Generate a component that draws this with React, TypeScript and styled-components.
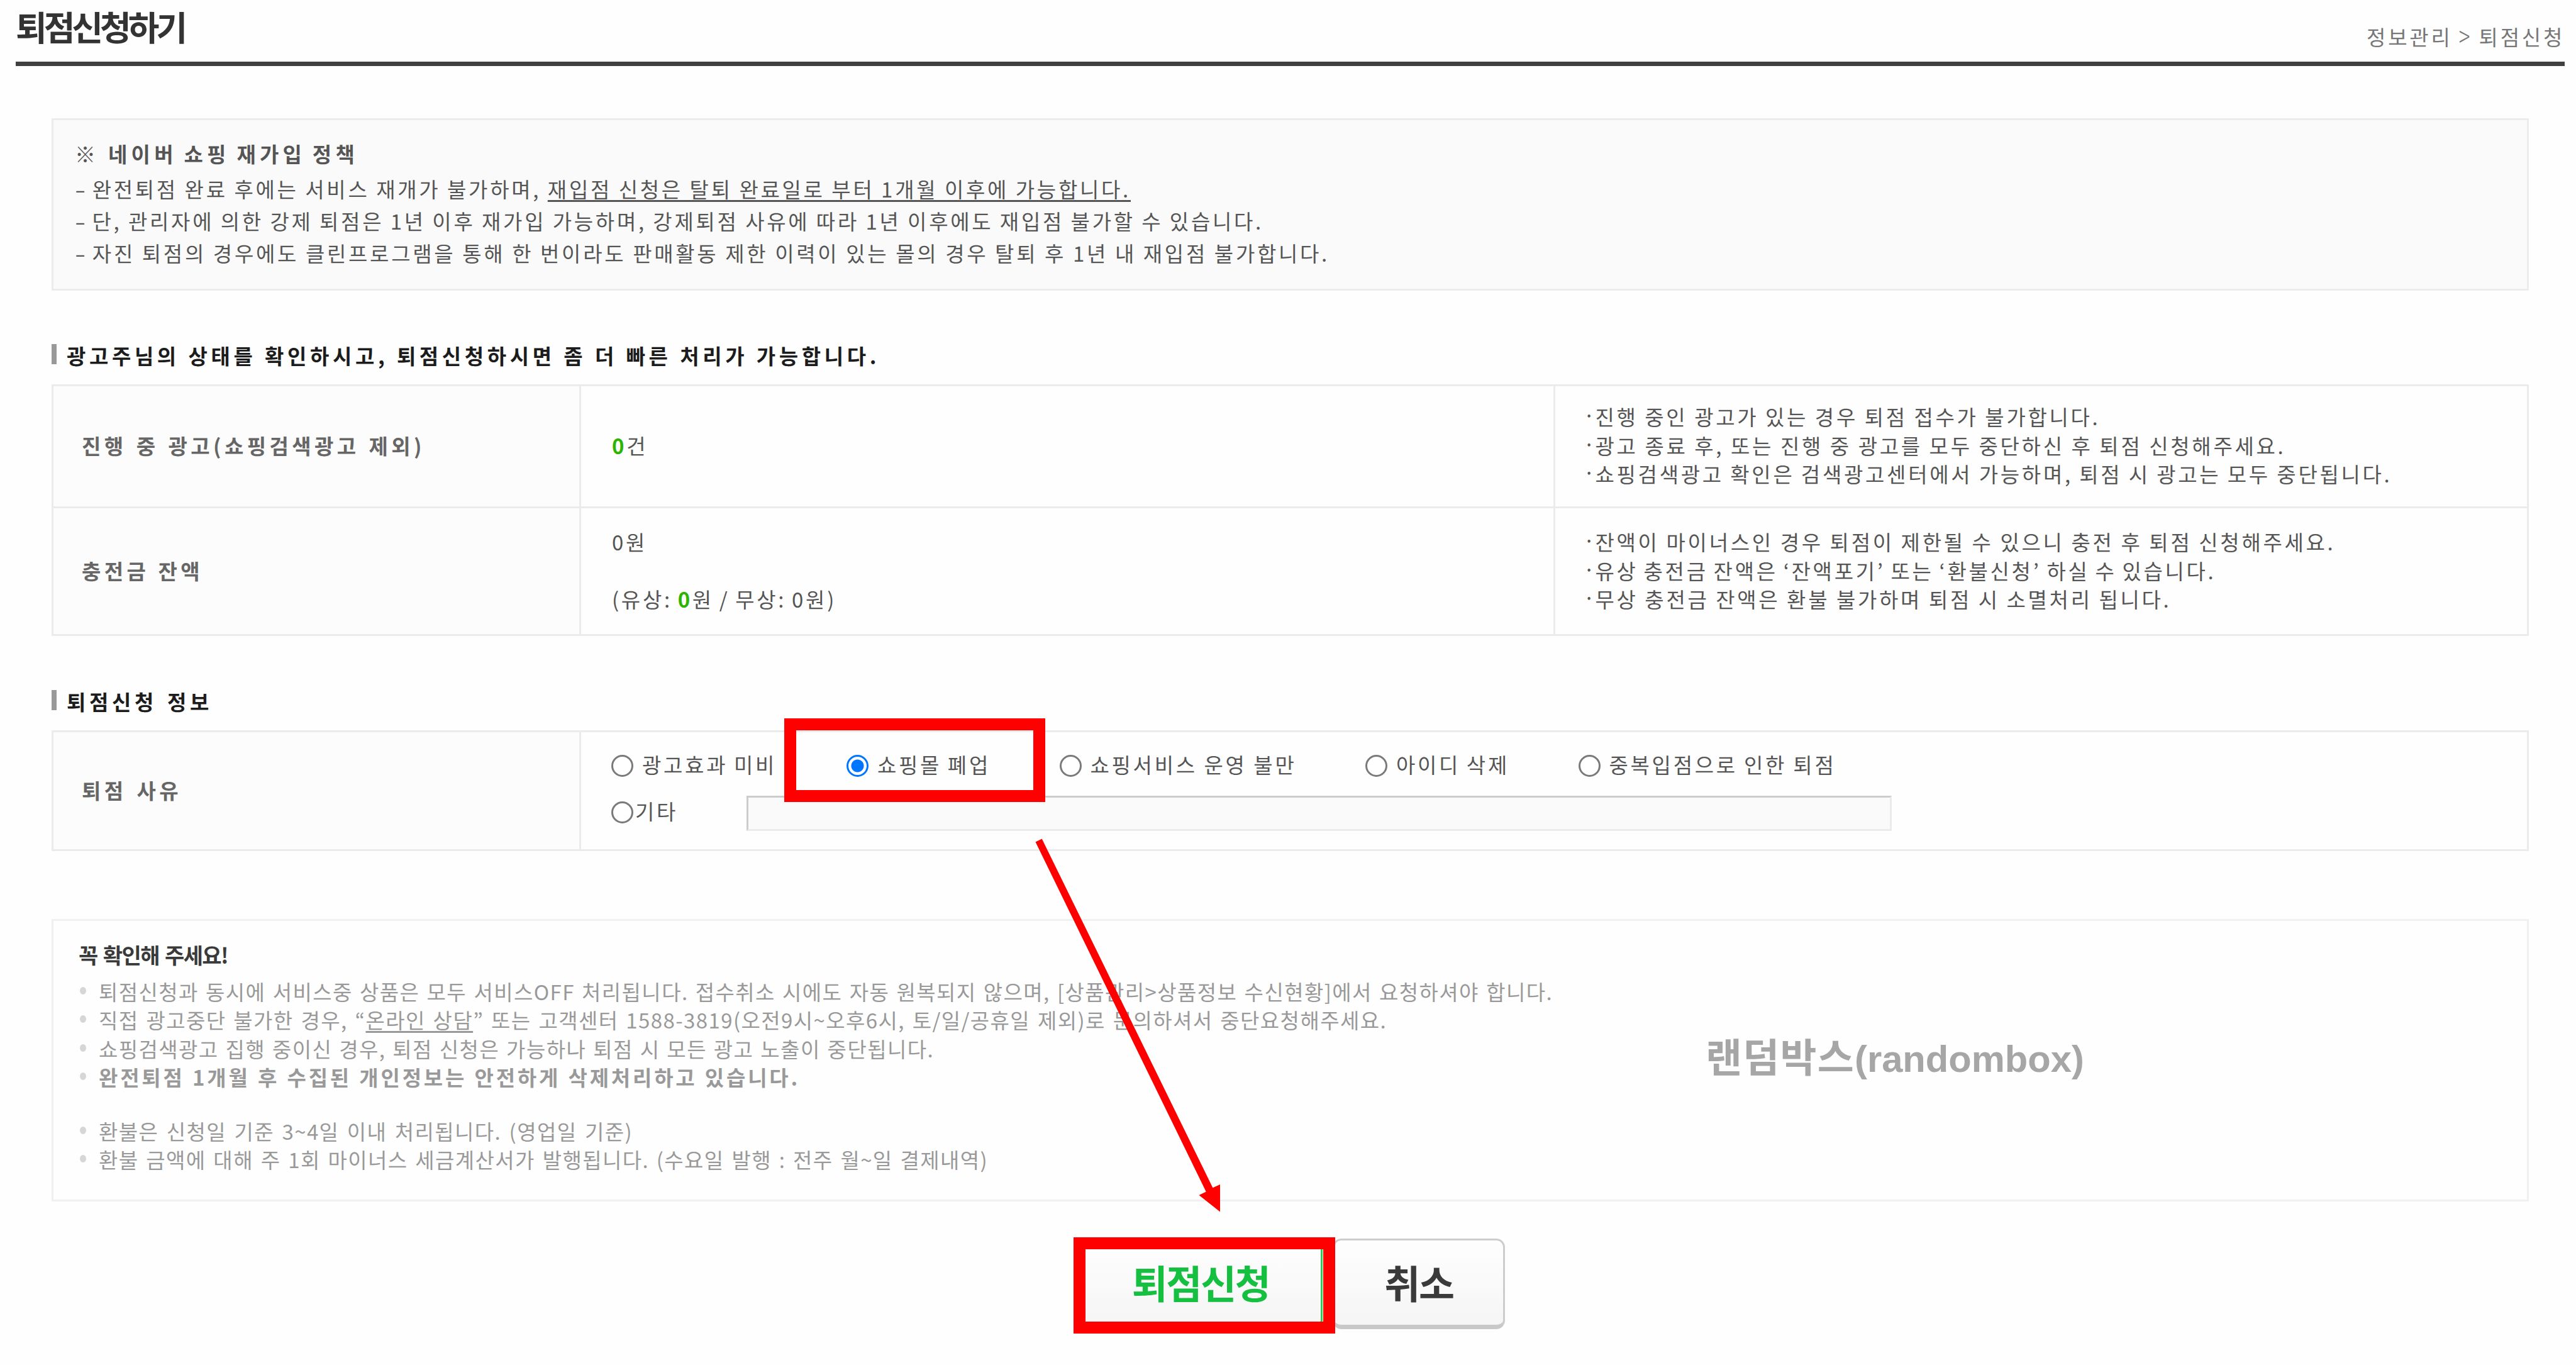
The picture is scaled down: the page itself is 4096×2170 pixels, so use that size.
import styled, { createGlobalStyle } from 'styled-components'

const App = () => {
  return (
    <Page>
      <GlobalStyle />
      <Header>
        <Title>퇴점신청하기</Title>
        <Breadcrumb>정보관리 <Sep>&gt;</Sep> 퇴점신청</Breadcrumb>
      </Header>

      <PolicyBox>
        <PolicyTitle $w={451}>※ 네이버 쇼핑 재가입 정책</PolicyTitle>
        <PolicyLine $w={1679}>
          <Dash>-</Dash> 완전퇴점 완료 후에는 서비스 재개가 불가하며, <u>재입점 신청은 탈퇴 완료일로 부터 1개월 이후에 가능합니다.</u>
        </PolicyLine>
        <PolicyLine $w={1890}>
          <Dash>-</Dash> 단, 관리자에 의한 강제 퇴점은 1년 이후 재가입 가능하며, 강제퇴점 사유에 따라 1년 이후에도 재입점 불가할 수 있습니다.
        </PolicyLine>
        <PolicyLine $w={1995}>
          <Dash>-</Dash> 자진 퇴점의 경우에도 클린프로그램을 통해 한 번이라도 판매활동 제한 이력이 있는 몰의 경우 탈퇴 후 1년 내 재입점 불가합니다.
        </PolicyLine>
      </PolicyBox>

      <SectionTitle $top={85}>
        <SectionText $w={1293}>광고주님의 상태를 확인하시고, 퇴점신청하시면 좀 더 빠른 처리가 가능합니다.</SectionText>
      </SectionTitle>
      <StatusTable>
        <Label>
          <LabelText $w={546}>진행 중 광고(쇼핑검색광고 제외)</LabelText>
        </Label>
        <Cell>
          <Line><Num>0</Num>건</Line>
        </Cell>
        <Cell>
          <Note><Dot>·</Dot><Line $w={803}>진행 중인 광고가 있는 경우 퇴점 접수가 불가합니다.</Line></Note>
          <Note><Dot>·</Dot><Line $w={1098}>광고 종료 후, 또는 진행 중 광고를 모두 중단하신 후 퇴점 신청해주세요.</Line></Note>
          <Note><Dot>·</Dot><Line $w={1267}>쇼핑검색광고 확인은 검색광고센터에서 가능하며, 퇴점 시 광고는 모두 중단됩니다.</Line></Note>
        </Cell>
        <Label>
          <LabelText $w={193}>충전금 잔액</LabelText>
        </Label>
        <Cell>
          <Line>0원</Line>
          <Line>&nbsp;</Line>
          <Line $w={357}>(유상: <Num>0</Num>원 / 무상: 0원)</Line>
        </Cell>
        <Cell>
          <Note><Dot>·</Dot><Line $w={1177}>잔액이 마이너스인 경우 퇴점이 제한될 수 있으니 충전 후 퇴점 신청해주세요.</Line></Note>
          <Note><Dot>·</Dot><Line $w={987}>유상 충전금 잔액은 ‘잔액포기’ 또는 ‘환불신청’ 하실 수 있습니다.</Line></Note>
          <Note><Dot>·</Dot><Line $w={916}>무상 충전금 잔액은 환불 불가하며 퇴점 시 소멸처리 됩니다.</Line></Note>
        </Cell>
      </StatusTable>

      <SectionTitle $top={86}>
        <SectionText $w={232}>퇴점신청 정보</SectionText>
      </SectionTitle>
      <ReasonTable>
        <Label>
          <LabelText $w={159}>퇴점 사유</LabelText>
        </Label>
        <Reasons>
          <ReasonRow>
            <Option $w={374}><Radio name="reason" /><Line $w={214}>광고효과 미비</Line></Option>
            <Option $w={338.5}><Radio name="reason" defaultChecked /><Line $w={180}>쇼핑몰 폐업</Line></Option>
            <Option $w={486.5}><Radio name="reason" /><Line $w={328}>쇼핑서비스 운영 불만</Line></Option>
            <Option $w={338.5}><Radio name="reason" /><Line $w={180}>아이디 삭제</Line></Option>
            <Option $w={420}><Radio name="reason" /><Line $w={361}>중복입점으로 인한 퇴점</Line></Option>
          </ReasonRow>
          <EtcRow>
            <Option $w={215} $gap={3} $drop={2}><Radio name="reason" /><Line>기타</Line></Option>
            <EtcInput />
          </EtcRow>
        </Reasons>
      </ReasonTable>

      <GuideBox>
        <GuideTitle>꼭 확인해 주세요!</GuideTitle>
        <GuideItem>
          <GuideLine $w={2312}>퇴점신청과 동시에 서비스중 상품은 모두 서비스OFF 처리됩니다. 접수취소 시에도 자동 원복되지 않으며, [상품관리&gt;상품정보 수신현황]에서 요청하셔야 합니다.</GuideLine>
        </GuideItem>
        <GuideItem>
          <GuideLine $w={2048}>직접 광고중단 불가한 경우, “<u>온라인 상담</u>” 또는 고객센터 1588-3819(오전9시~오후6시, 토/일/공휴일 제외)로 문의하셔서 중단요청해주세요.</GuideLine>
        </GuideItem>
        <GuideItem>
          <GuideLine $w={1328}>쇼핑검색광고 집행 중이신 경우, 퇴점 신청은 가능하나 퇴점 시 모든 광고 노출이 중단됩니다.</GuideLine>
        </GuideItem>
        <GuideItem>
          <GuideStrong $w={1115}>완전퇴점 1개월 후 수집된 개인정보는 안전하게 삭제처리하고 있습니다.</GuideStrong>
        </GuideItem>
        <GuideItem $top={40}>
          <GuideLine $w={849}>환불은 신청일 기준 3~4일 이내 처리됩니다. (영업일 기준)</GuideLine>
        </GuideItem>
        <GuideItem>
          <GuideLine $w={1414}>환불 금액에 대해 주 1회 마이너스 세금계산서가 발행됩니다. (수요일 발행 : 전주 월~일 결제내역)</GuideLine>
        </GuideItem>
      </GuideBox>

      <Buttons>
        <SubmitButton>퇴점신청</SubmitButton>
        <CancelButton>취소</CancelButton>
      </Buttons>

      <Watermark><span>랜덤박스</span>(randombox)</Watermark>
      <Marker $x={1247} $y={1142} $w={414.5} $h={132.5} />
      <Marker $x={1706.5} $y={1967} $w={416} $h={152.5} />
      <Arrow viewBox="0 0 300 600">
        <polygon points="16.7,3.4 288.4,558.2 300,553 300,596.4 266.5,570 277.7,564.5 6.5,8.6" />
      </Arrow>
    </Page>
  )
}

const GlobalStyle = createGlobalStyle`
  * {
    box-sizing: border-box;
  }
  body {
    margin: 0;
    background: #fefefe;
    overflow: hidden;
  }
`

const Page = styled.div`
  position: relative;
  width: 4096px;
  height: 2170px;
  padding-left: 25px;
  overflow: hidden;
  background: #fefefe;
  color: #555;
  font-family: 'Noto Sans CJK KR', sans-serif;
  font-weight: 400;
  font-size: 33px;
`

const Header = styled.header`
  display: flex;
  justify-content: space-between;
  width: 4053px;
  height: 104.5px;
  border-bottom: 7.5px solid #404040;
`

const Title = styled.h1`
  margin: 0;
  padding-top: 11px;
  font-size: 54px;
  line-height: 62px;
  font-weight: 700;
  letter-spacing: -5px;
  color: #333;
`

const Breadcrumb = styled.div`
  width: 315px;
  padding-top: 34px;
  line-height: 48px;
  letter-spacing: 3.8px;
  word-spacing: -1px;
  color: #777;
  white-space: nowrap;
`

const Sep = styled.span`
  display: inline-block;
  font-weight: 300;
  transform: translateY(-3px) scaleY(1.4);
`

// every text line is stretched between its word gaps to a known width
const Line = styled.div<{ $w?: number }>`
  flex: none;
  width: ${({ $w }) => ($w ? `${$w}px` : 'auto')};
  line-height: 45.4px;
  letter-spacing: 3.7px;
  word-spacing: -4px;
  text-align-last: ${({ $w }) => ($w ? 'justify' : 'left')};

  u {
    text-underline-offset: 4px;
    text-decoration-thickness: 3px;
    text-decoration-skip-ink: none;
  }
`

const PolicyBox = styled.section`
  width: 3939px;
  height: 273.5px;
  margin: 83.5px 0 0 57px;
  padding: 28px 0 0 34px;
  border: 3px solid #ececec;
  background: #fafafa;
`

const PolicyLine = styled(Line)`
  line-height: 51px;
`

const PolicyTitle = styled(PolicyLine)`
  margin-bottom: 5px;
  font-weight: 700;
  letter-spacing: 6.2px;
  word-spacing: -6px;
`

const Dash = styled.span`
  display: inline-block;
  width: 17px;
  transform: scaleX(1.5);
  transform-origin: 0 50%;
`

const SectionTitle = styled.div<{ $top: number }>`
  display: flex;
  align-items: flex-start;
  height: 64px;
  margin: ${({ $top }) => $top}px 0 0 57px;

  &::before {
    content: '';
    width: 8px;
    height: 32px;
    margin-right: 16px;
    background: #999;
  }
`

const SectionText = styled(Line)`
  margin-top: -4px;
  font-weight: 700;
  letter-spacing: 5.6px;
  color: #1c1c1c;
`

const StatusTable = styled.div`
  display: grid;
  grid-template-columns: 839px 1548.5px 1548.5px;
  grid-template-rows: 194px 203.5px;
  width: 3939px;
  margin-left: 57px;
  border: solid #ebebeb;
  border-width: 3px 0 0 3px;
`

const ReasonTable = styled(StatusTable)`
  grid-template-columns: 839px 3097px;
  grid-template-rows: 188.5px;
`

const Cell = styled.div`
  display: flex;
  flex-direction: column;
  justify-content: center;
  padding: 0 0 1px 49px;
  border: solid #ebebeb;
  border-width: 0 3px 3px 0;
`

const Label = styled(Cell)`
  padding-left: 45px;
  background: #fcfcfc;
`

const LabelText = styled(Line)`
  font-weight: 700;
  letter-spacing: 5.4px;
  color: #666;
`

const Num = styled.b`
  font-weight: 700;
  color: #2db400;
`

const Note = styled.div`
  display: flex;
`

const Dot = styled.span`
  width: 19px;
  margin-left: -4px;
  line-height: 38px;
`

const Reasons = styled(Cell)`
  justify-content: flex-start;
  padding: 29px 0 0 48px;
`

const ReasonRow = styled.div`
  display: flex;
  height: 72px;
`

const EtcRow = styled.div`
  display: flex;
`

const Option = styled.label<{ $w: number; $gap?: number; $drop?: number }>`
  display: flex;
  align-items: flex-start;
  gap: ${({ $gap = 14 }) => $gap}px;
  width: ${({ $w }) => $w}px;
  padding-top: ${({ $drop = 0 }) => $drop}px;
`

const Radio = styled.input.attrs({ type: 'radio' })`
  appearance: none;
  flex: none;
  width: 35px;
  height: 35px;
  margin: 7px 0 0;
  border: 3px solid #7a7a7a;
  border-radius: 50%;
  background: #fff;

  &:checked {
    border-color: #0075ff;
    background: radial-gradient(circle, #0075ff 9.5px, #fff 10.5px);
  }
`

const EtcInput = styled.input`
  width: 1821px;
  height: 56px;
  padding: 0;
  border: 3px solid #ebebeb;
  border-top-color: #ccc;
  border-left-color: #ccc;
  background: #fafafa;
`

const GuideBox = styled.section`
  width: 3939px;
  height: 448.5px;
  margin: 108.5px 0 0 57px;
  padding: 32px 0 0 42px;
  border: 3px solid #f0f0f0;
  color: #999;
`

const GuideTitle = styled.h2`
  margin: 0 0 14px -2px;
  font-size: 34px;
  line-height: 44px;
  font-weight: 700;
  letter-spacing: -1.6px;
  word-spacing: 3px;
  color: #3a3a3a;
`

const GuideItem = styled.div<{ $top?: number }>`
  display: flex;
  margin-top: ${({ $top = 0 }) => $top}px;

  &::before {
    content: '';
    width: 10px;
    height: 12px;
    margin: 15px 20px 0 0;
    border-radius: 50%;
    background: #d6d6d6;
  }
`

const GuideLine = styled(Line)`
  letter-spacing: 1.4px;
`

const GuideStrong = styled(Line)`
  font-weight: 700;
  letter-spacing: 3.8px;
`

const Buttons = styled.div`
  display: flex;
  margin: 59.5px 0 0 1690px;
`

const Button = styled.button`
  height: 144px;
  padding: 0 0 2px;
  border: 3px solid #ccc;
  border-bottom: 7px solid #c8c8c8;
  border-radius: 14px;
  background: linear-gradient(#fefefe, #f5f5f5);
  font-family: inherit;
  font-size: 62px;
  font-weight: 700;
  letter-spacing: -2.4px;
  color: #3a3a3a;
`

const SubmitButton = styled(Button)`
  width: 388px;
  border-color: #2fcb52;
  color: #15bf3f;
`

const CancelButton = styled(Button)`
  width: 274px;
  margin-left: 16px;
`

const Watermark = styled.div`
  position: absolute;
  left: 2712px;
  top: 1632px;
  font: 700 59.7px/90px 'Liberation Sans', sans-serif;
  color: #a6a6a6;
  white-space: nowrap;

  span {
    font-family: 'Noto Sans CJK KR', sans-serif;
    font-size: 63px;
    letter-spacing: 1.3px;
  }
`

const Marker = styled.div<{ $x: number; $y: number; $w: number; $h: number }>`
  position: absolute;
  left: ${({ $x }) => $x}px;
  top: ${({ $y }) => $y}px;
  width: ${({ $w }) => $w}px;
  height: ${({ $h }) => $h}px;
  border: 19.5px solid #f00;
`

const Arrow = styled.svg`
  position: absolute;
  left: 1640px;
  top: 1330px;
  width: 300px;
  height: 600px;
  fill: #f00;
`

export default App
